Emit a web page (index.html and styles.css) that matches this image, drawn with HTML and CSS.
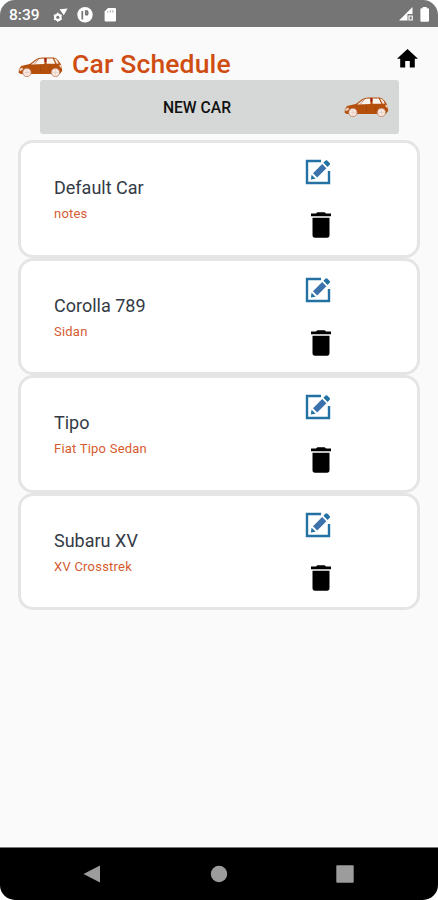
FILE: index.html
```html
<!DOCTYPE html>
<html lang="en">
<head>
<meta charset="utf-8">
<title>Car Schedule</title>
<link rel="stylesheet" href="styles.css">
</head>
<body>
<svg class="defs" aria-hidden="true">
  <symbol id="car" viewBox="0 0 44 20">
    <path d="M.8 12.2 3 8.7 11.5 6.8 18 2Q20 .6 24 .5L35 .5Q37.5 .8 39.5 3.5L42 7 43.3 13.5 41 16.5H3L.7 15.5Z" fill="#b4500c"/>
    <path d="M12.8 7.4 18.8 2.6Q20.4 1.5 25.8 1.4V6.8Z" fill="#fbf5f2"/>
    <path d="M28 1.4H34L36.4 6.5H28Z" fill="#fbf5f2"/>
    <path d="M35.2 1.5Q37.3 1.8 38.2 3.2L40 6.3 37.8 6.5Z" fill="#f6e8e0"/>
    <path d="M16 7 20.3 2" stroke="#c07a64" stroke-width=".8"/>
    <path d="M25.9 .9H27.7V4.5H25.9Z" fill="#a01c10"/>
    <path d="M22 8V15M31 8V15" stroke="#9a4106" stroke-width=".5"/>
    <path d="M1 12.3 4.2 10 4.8 12.2 2 13.8ZM40.3 7.6 42.2 7.8 42.7 10.5 41 10Z" fill="#f2d6c8"/>
    <g fill="#f7e9e2" stroke="#c07a60" stroke-width=".8"><circle cx="8.7" cy="15.1" r="4.1"/><circle cx="36.6" cy="15.1" r="4.1"/></g>
    <path d="M8.7 12V18.2M5.6 15.1H11.8M36.6 12V18.2M33.5 15.1H39.7" stroke="#e7c7b8" stroke-width=".6"/>
  </symbol>
  <symbol id="edit" viewBox="0 0 26 26">
    <path d="M16 2H2V24H24V12" fill="none" stroke="#2372a3" stroke-width="2.4"/>
    <path d="M6.6 15.8 10.6 19.8 5.8 20.6Z" fill="#2372a3"/>
    <path d="M8 14.2 17.2 5 21.4 9.2 12.2 18.4Z" fill="#3b72ab"/>
    <path d="M18.4 3.8 20.6 1.6Q21.6 .8 22.5 1.7L24.7 3.9Q25.6 4.8 24.7 5.7L22.6 7.9Z" fill="#2372a3"/>
  </symbol>
  <symbol id="trash" viewBox="0 0 20 26">
    <path d="M0 1.6H5L6.3.3H13.7L15 1.6H20V4.3H0ZM1.5 5.7H18.5V23Q18.5 25.7 16 25.7H4Q1.5 25.7 1.5 23Z"/>
  </symbol>
</svg>
<div class="phone">
  <div class="status">
    <span class="clock">8:39</span>
    <svg class="status-icons" viewBox="0 0 64 16" fill="#fff">
      <circle cx="4.8" cy="10.3" r="2.8" fill="none" stroke="#fff" stroke-width="2.2"/>
      <path d="M4.8 5.6V15M.8 8 8.8 12.6M.8 12.6 8.8 8" stroke="#fff" stroke-width="1.2"/>
      <circle cx="4.8" cy="10.3" r="1.5" fill="#757575"/>
      <path d="M6.5 2.2 14.6 1.4 10.8 8.3Z"/>
      <circle cx="32" cy="7.7" r="7.7"/>
      <path d="M29.3 12.5V4M32.8 8.3V4.1H34.3Q35.5 5.9 34.3 7.7H32.8" fill="none" stroke="#757575" stroke-width="1.7"/>
      <path d="M55 1H62Q63 1 63 2V13.5Q63 14.5 62 14.5H52.6Q51.6 14.5 51.6 13.5V4.5Z"/>
      <path d="M54.7 4V5.7M57.3 3.2V5.7M59.9 3.2V5.7" stroke="#aaa" stroke-width="1"/>
    </svg>
    <svg class="system-icons" viewBox="0 0 32 16" fill="#fff">
      <path d="M13.5 0V7H8.5V13.5H0Z"/>
      <path d="M10 13V9H13.2V13Z" fill="none" stroke="#fff" stroke-width="1.2"/>
      <path d="M23.7 1.2V0H27.7V1.2H29Q30 1.2 30 2.2V13.7Q30 14.7 29 14.7H22.4Q21.4 14.7 21.4 13.7V2.2Q21.4 1.2 22.4 1.2Z"/>
    </svg>
  </div>
  <header class="header">
    <svg class="car"><use href="#car"/></svg>
    <h1>Car Schedule</h1>
    <svg class="home" viewBox="0 0 21 19"><path d="M10.5 0 21 9.7H17.8V18.5H12.8V12H8.2V18.5H3.2V9.7H0Z"/></svg>
  </header>
  <button class="new-car"><span>NEW CAR</span><svg class="car"><use href="#car"/></svg></button>
  <main class="cars">
    <article class="card">
      <div class="info"><h2>Default Car</h2><p>notes</p></div>
      <div class="actions"><svg class="edit"><use href="#edit"/></svg><svg class="trash"><use href="#trash"/></svg></div>
    </article>
    <article class="card">
      <div class="info"><h2>Corolla 789</h2><p>Sidan</p></div>
      <div class="actions"><svg class="edit"><use href="#edit"/></svg><svg class="trash"><use href="#trash"/></svg></div>
    </article>
    <article class="card">
      <div class="info"><h2>Tipo</h2><p>Fiat Tipo Sedan</p></div>
      <div class="actions"><svg class="edit"><use href="#edit"/></svg><svg class="trash"><use href="#trash"/></svg></div>
    </article>
    <article class="card">
      <div class="info"><h2>Subaru XV</h2><p>XV Crosstrek</p></div>
      <div class="actions"><svg class="edit"><use href="#edit"/></svg><svg class="trash"><use href="#trash"/></svg></div>
    </article>
  </main>
  <nav class="nav">
    <svg viewBox="0 0 18 18"><path d="M17 .5V17.5L.5 9Z"/></svg>
    <svg viewBox="0 0 18 18"><circle cx="9" cy="9" r="8.2"/></svg>
    <svg viewBox="0 0 18 18"><rect x=".3" y=".3" width="17.4" height="17.4" rx="1"/></svg>
  </nav>
</div>
</body>
</html>
```
FILE: styles.css
```css
* { box-sizing: border-box; }
body { margin: 0; background: #fff; font-family: Roboto, sans-serif; }
h1, h2, p { margin: 0; }
svg { display: block; flex: none; }
.defs { position: absolute; width: 0; height: 0; }
.phone {
  width: 438px;
  height: 900px;
  display: flex;
  flex-direction: column;
  background: #fafafa;
  border-radius: 15px;
  overflow: hidden;
}
.status {
  height: 27px;
  flex: none;
  display: flex;
  align-items: center;
  padding: 2px 7px 0 9px;
  background: #757575;
  color: #fff;
}
.clock { width: 44px; font-size: 15.5px; font-weight: 500; }
.status-icons { width: 64px; height: 16px; }
.system-icons { width: 32px; height: 16px; margin-left: auto; }
.header {
  height: 53px;
  flex: none;
  display: flex;
  align-items: flex-start;
  padding: 0 20px 0 18px;
}
.car { width: 45px; height: 20.5px; }
.header .car { margin-top: 29.5px; }
h1 {
  margin: 21px 0 0 9px;
  font-size: 26.5px;
  line-height: 32px;
  font-weight: 500;
  letter-spacing: .16px;
  color: #cf4d11;
  white-space: nowrap;
}
.home { width: 21px; height: 19px; margin: 22px 0 0 auto; }
.new-car {
  height: 54px;
  flex: none;
  margin: 0 39px 0 40px;
  padding: 0 10px 0 55px;
  display: flex;
  align-items: center;
  border: 0;
  border-radius: 3px;
  background: #d6d8d7;
  color: #111;
  font: 500 15.7px Roboto, sans-serif;
}
.new-car span { flex: 1; text-align: center; padding-right: 45px; }
.cars { padding: 6px 18px 0; flex: 1; }
.card {
  height: 117.5px;
  display: flex;
  background: #fff;
  border: 3px solid #e5e5e5;
  border-radius: 15px;
}
.info { width: 284px; padding: 33px 0 0 33px; }
h2 { font-size: 18px; line-height: 24px; font-weight: 400; color: #343a45; }
p { margin-top: 5px; font-size: 13px; line-height: 18px; letter-spacing: .22px; color: #d65b30; }
.actions { padding-top: 16px; }
.edit { width: 26px; height: 26px; }
.trash { width: 20px; height: 26px; margin: 27px 0 0 6px; }
.nav {
  height: 53px;
  flex: none;
  display: flex;
  justify-content: space-between;
  align-items: center;
  padding: 0 84px 0 83px;
  background: #000;
  border-top: 1px solid #777;
}
.nav svg { width: 18px; height: 18px; fill: #9c9c9c; }
```
